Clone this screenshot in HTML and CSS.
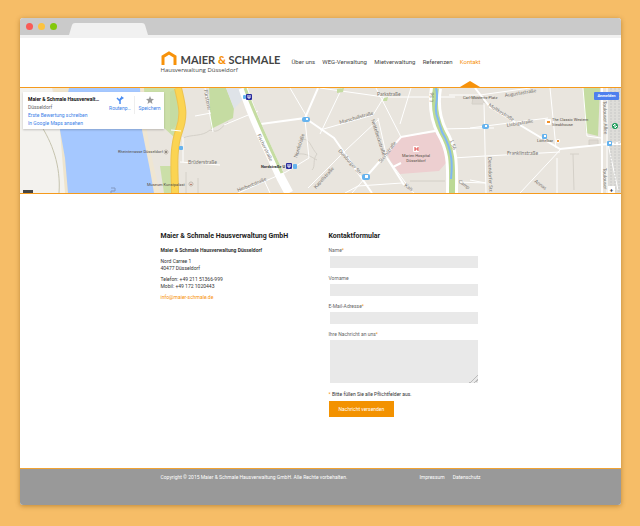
FILE: index.html
```html
<!DOCTYPE html>
<html lang="de">
<head>
<meta charset="utf-8">
<meta name="viewport" content="width=device-width, initial-scale=1">
<title>Maier &amp; Schmale Hausverwaltung Düsseldorf</title>
<link rel="stylesheet" href="styles.css">
</head>
<body>
<div class="window">
  <div class="chrome">
    <i class="dot red"></i><i class="dot yellow"></i><i class="dot green"></i>
    <svg class="tab" viewBox="0 0 80 12" aria-hidden="true"><path d="M0 12 L3 2 Q3.500 0 6 0 H73 Q75.500 0 76 2 L79 12Z" fill="#f1f1f1"/></svg>
  </div>
  <div class="toolbar"></div>
  <header class="header">
    <div class="container header-row">
      <a class="logo" href="#">
        <span class="logo-top">
          <svg class="house" viewBox="0 0 16 14" aria-hidden="true"><path d="M2 14V5.600L8 2L14 5.600V14" fill="none" stroke="#f7920a" stroke-width="3"/></svg>
          <span class="brand">MAIER <b>&amp;</b> SCHMALE</span>
        </span>
        <span class="claim">Hausverwaltung Düsseldorf</span>
      </a>
      <nav class="nav">
        <a href="#">Über uns</a>
        <a href="#">WEG-Verwaltung</a>
        <a href="#">Mietverwaltung</a>
        <a href="#">Referenzen</a>
        <a href="#" class="active">Kontakt</a>
      </nav>
    </div>
  </header>

  <section class="map">
    <svg class="map-art" viewBox="20 88 601 105" preserveAspectRatio="xMidYMid slice" role="img" aria-label="Karte">
      <rect x="20" y="88" width="601" height="105" fill="#e9e5de"/>
      <path d="M20 88H52L60 130L69 193H20Z" fill="#f3f2ee"/>
      <path d="M53 88L60 130L65 193H70L66 130L69 88Z" fill="#eee4cd"/>
      <path d="M69 88H153L144 130L150 160L156 193H68L65 158L60 130Z" fill="#a5c8ff"/>
      <path d="M140 88L142 130L150 170L154 193H160L150 150L146 125L150 88Z" fill="#efe6d2"/>
      <path d="M40 124C52 142 61 166 59 193" fill="none" stroke="#c5c3ae"/>
      <path d="M144 88H176L180 120L174 137L164 128L146 126Z" fill="#cbdfa8"/>
      <path d="M160 166H173V193H164Z" fill="#cbdfa8"/>
      <path d="M170 92L177 88L180 122L170 131Z" fill="#c5dca2"/>
      <path d="M209 88H226L234 108L233 118L211 129Z" fill="#c5dca2"/>
      <path d="M226 88H240L246 96L234 109Z" fill="#dfe3e8"/>
      <path d="M583 88H600L598 136L586 133Z" fill="#c5dca2"/>
      <path d="M608 88H621V193H608Z" fill="#deddd9"/>
      <path d="M399 137L440 132L444 147L446 163L439 171L400 174L390 160L387 153Z" fill="#edcfd0"/>
      <path d="M393 167L401 163" stroke="#fff" stroke-width="2"/>
      <path d="M178 88C182 105 185 115 179 131C172 150 175 175 175 193" fill="none" stroke="#edc34f" stroke-width="8"/>
      <path d="M178 88C182 105 185 115 179 131C172 150 175 175 175 193" fill="none" stroke="#fbd452" stroke-width="6"/>
      <g fill="none" stroke="#d4d0c8">
        <path d="M183 138C192 134 202 137 210 130C219 134 221 127 228 122M298 141C310 135 310 147 317 154C312 160 316 166 312 170M298 154C307 153 311 157 317 160"/>
        <path d="M186 172V193M198 178V193M410 181H445M573 154L574 190M570 154H579"/>
        <path d="M589 140H598V145H589ZM473 97L480 95L485 104H472Z" fill="#ded9d2"/>
      </g>
      <g fill="none" stroke="#fff" stroke-width="1">
        <path d="M180 162L220 165M205 88L213 132M195 116L211 113M181 131L171 130M183 137V162"/>
        <path d="M224 125L258 111M238 193L286 172L309 158L305 120M264 180L270 193"/>
        <path d="M290 88L307 117M308 188L346 150L378 120M320 134L342 88M320 130L373 115L384 97M376 88L401 137M384 97L320 88M384 97H455M411 88L400 124M378 118L387 158L408 186"/>
        <path d="M441 129L485 128H494M453 158L485 156M456 182L486 183M352 193L401 137M345 193L358 186L402 183L414 193M449 95H480L530 88"/>
        <path d="M484 103L486 193M470 128L548 118M486 156L560 152M550 88L556 148M486 183L470 180M557 158V193M520 193L561 149"/>
        <path d="M583 88L587 136L601 138M620 142L608 144L618 190"/>
      </g>
      <g fill="none" stroke="#fff" stroke-width="2">
        <path d="M261 124L305 118L318 88M305 118L334 138L372 193M401 137L440 130M401 137L366 177M387 158L404 185"/>
        <path d="M475 88L490 107L560 149L608 144H621M602 88V193"/>
        <path d="M607 88V193" stroke-width="1"/>
      </g>
      <path d="M243 88C254 122 267 147 281 178L289 193" fill="none" stroke="#fff" stroke-width="9"/>
      <path d="M245 88C256 118 267 140 282 173" fill="none" stroke="#c5dca2" stroke-width="3"/>
      <path d="M436 88C433 106 436 120 442 132C454 152 452 168 452 193" fill="none" stroke="#fff" stroke-width="12"/>
      <path d="M436 88C433 106 436 120 442 132C454 152 452 168 452 193" fill="none" stroke="#bcd996" stroke-width="6"/>
      <path d="M436 88C440 100 432 107 438 119C440 126 442 132 442 132C454 152 452 168 451 179" fill="none" stroke="#80b8f3" stroke-width="2"/>
      <path d="M337 89L344 88L343 92L337 93ZM384 98L388 97L387 101L383 101Z" fill="#c5dca2"/>
      <path d="M611 88V193M615 88V193M619 88V193" stroke="#c8c8c7" stroke-dasharray="2 1"/>

      <g class="street">
        <text x="188" y="164">Brüderstraße</text>
        <text x="377" y="96">Parkstraße</text>
        <text x="507" y="155">Franklinstraße</text>
        <text transform="translate(257 135) rotate(64)">Fischerstraße</text>
        <text transform="translate(297 158) rotate(-72)">Nordstraße</text>
        <text transform="translate(340 124) rotate(-16)">Marschallstraße</text>
        <text transform="translate(371 120) rotate(72)">Nettelbeckstraße</text>
        <text transform="translate(338 151) rotate(48)">Duisburger Str.</text>
        <text transform="translate(316 189) rotate(-48)">Kapellstraße</text>
        <text transform="translate(381 163) rotate(-52)">Sternstraße</text>
        <text transform="translate(238 192) rotate(-22)">Herbertstraße</text>
        <text transform="translate(505 97) rotate(-9)">Augustastraße</text>
        <text transform="translate(507 127) rotate(-10)">Liebigstraße</text>
        <text transform="translate(488 106) rotate(32)">Moltkestraße</text>
        <text transform="translate(488 157) rotate(88)">Derendorfer Str.</text>
        <text transform="translate(603 101) rotate(88)">Toulouser Allee</text>
        <text transform="translate(603 168) rotate(88)">Toulouser</text>
        <text transform="translate(534 182) rotate(36)">Annas</text>
        <text transform="translate(458 182) rotate(36)">Camp</text>
        <text transform="translate(404 186) rotate(36)">Kais</text>
        <text transform="translate(204 90) rotate(80)">Fürstenw</text>
        <text transform="translate(450 141) rotate(70)">L 56</text>
        <text transform="translate(433 102) rotate(-85)">L 56</text>
      </g>
      <g class="place">
        <text x="118" y="153">Rheinterrasse Düsseldorf</text>
        <text x="147" y="186">Museum Kunstpalast</text>
        <text x="463" y="99">Carl-Mosterts-Platz</text>
        <text x="261" y="168" class="strong">Nordstraße U</text>
        <text x="537" y="142">Löffelbar</text>
        <text x="552" y="121">The Classic Western</text>
        <text x="552" y="126">Steakhouse</text>
        <text x="416" y="157" text-anchor="middle">Marien Hospital</text>
        <text x="416" y="162" text-anchor="middle">Düsseldorf</text>
      </g>
      <rect x="413" y="146" width="6" height="6" rx="1" fill="#fff"/><path d="M415 147V151M418 147V151M415 149H418" stroke="#e14545"/>
      <g fill="#fff" stroke="#bdb4a8"><circle cx="166" cy="152" r="2"/><circle cx="191" cy="184" r="2"/></g>
      <circle cx="166" cy="152" r="1" fill="#6d6256"/><path d="M190 185L191 183L192 185Z" fill="#a75e44"/>
      <g fill="#2b2c9d"><rect x="246" y="94" width="6" height="6" rx="1"/><rect x="286" y="163" width="6" height="6" rx="1"/></g>
      <path d="M248 95V98H250V95M288 164V167H290V164" fill="none" stroke="#fff"/>
      <g fill="#66b3ee">
        <rect x="243" y="95" width="3" height="4" rx="1"/>
        <rect x="293" y="164" width="4" height="5" rx="1"/>
        <rect x="179" y="146" width="4" height="4" rx="1"/>
        <rect x="302" y="117" width="8" height="5" rx="2"/>
        <rect x="362" y="174" width="8" height="6" rx="2"/>
        <rect x="482" y="124" width="7" height="5" rx="2"/>
        <rect x="542" y="134" width="5" height="5" rx="1"/>
        <rect x="607" y="141" width="5" height="5" rx="1"/>
      </g>
      <g fill="#fff"><rect x="306" y="118" width="2" height="2"/><rect x="365" y="175" width="3" height="3"/><rect x="485" y="125" width="2" height="2"/><rect x="544" y="135" width="2" height="2"/><rect x="609" y="142" width="2" height="2"/></g>
      <circle cx="615" cy="126" r="3" fill="#169b57"/><path d="M613 126L615 124V128L617 126" fill="none" stroke="#fff"/>
      <g fill="#fff"><rect x="545" y="119" width="6" height="6" rx="1"/><circle cx="558" cy="141" r="2"/></g>
      <path d="M547 121H550V123H547ZM557 140H559V142H557Z" fill="#f29128"/>
      <path d="M111 188H115V191H111V193" fill="none" stroke="#8198c1"/>
    </svg>
    <div class="place-card">
      <div class="place-info">
        <strong>Maier &amp; Schmale Hausverwalt…</strong>
        <span>Düsseldorf</span>
        <a href="#">Erste Bewertung schreiben</a>
        <a href="#">In Google Maps ansehen</a>
      </div>
      <a class="action" href="#"><svg viewBox="0 0 8 8" aria-hidden="true"><path d="M4 8V5L1 2M4 5Q4 2 6 2" fill="none" stroke="#4a8df2" stroke-width="1.500"/><path d="M5 0L8 2L5 4Z" fill="#4a8df2"/></svg>Routenp…</a>
      <a class="action save" href="#"><svg viewBox="0 0 8 8" aria-hidden="true"><path d="M4 0L5.100 2.800L8 3L5.800 4.900L6.500 8L4 6.300L1.500 8L2.200 4.900L0 3L2.900 2.800Z" fill="#999"/></svg>Speichern</a>
    </div>
    <button class="login" type="button">Anmelden</button>
    <button class="zoom" type="button" aria-label="Vergrößern">+</button>
    <span class="scale"></span>
  </section>

  <main class="main">
    <div class="container content">
      <section class="address">
        <h1>Maier &amp; Schmale Hausverwaltung GmbH</h1>
        <p><b>Maier &amp; Schmale Hausverwaltung Düsseldorf</b></p>
        <p>Nord Carree 1<br>40477 Düsseldorf</p>
        <p>Telefon: +49 211 51366-999<br>Mobil: +49 172 1020443</p>
        <p><a href="mailto:info@maier-schmale.de">info@maier-schmale.de</a></p>
      </section>
      <form class="form">
        <h2>Kontaktformular</h2>
        <label for="name">Name<em>*</em></label>
        <input id="name" type="text">
        <label for="vorname">Vorname</label>
        <input id="vorname" type="text">
        <label for="email">E-Mail-Adresse<em>*</em></label>
        <input id="email" type="email">
        <label for="msg">Ihre Nachricht an uns<em>*</em></label>
        <textarea id="msg"></textarea>
        <p class="hint"><em>*</em> Bitte füllen Sie alle Pflichtfelder aus.</p>
        <button class="submit" type="button">Nachricht versenden</button>
      </form>
    </div>
  </main>

  <footer class="footer">
    <div class="container footer-row">
      <span>Copyright © 2015 Maier &amp; Schmale Hausverwaltung GmbH. Alle Rechte vorbehalten.</span>
      <nav><a href="#">Impressum</a><a href="#">Datenschutz</a></nav>
    </div>
  </footer>
</div>
</body>
</html>
```
FILE: styles.css
```css
* { box-sizing: border-box; }
body {
  margin: 0;
  min-height: 100vh;
  padding: 18px 19px 21px 20px;
  display: flex;
  background: #f6bd67;
  color: #333;
  font: 5px/8px Roboto, sans-serif;
}
a { color: inherit; text-decoration: none; }
em { color: #f7920a; font-style: normal; }
.window {
  flex: 1;
  min-width: 0;
  display: flex;
  flex-direction: column;
  overflow: hidden;
  border-radius: 3px;
  background: #fff;
  box-shadow: 0 1px 5px rgba(120, 70, 0, .45);
}
.chrome {
  height: 17px;
  padding-left: 6px;
  display: flex;
  align-items: center;
  gap: 5px;
  background: #cacaca;
}
.dot { width: 7px; height: 7px; border-radius: 50%; }
.red { background: #fa5b55; }
.yellow { background: #fcc33f; }
.green { background: #83c80b; }
.tab { width: 80px; height: 12px; margin-left: 7px; align-self: flex-end; }
.toolbar { height: 3px; background: #f1f1f1; }
.container { width: 100%; max-width: 320px; margin: 0 auto; }
.header { height: 50px; padding-top: 12px; border-bottom: 1px solid #f59a1c; }
.header-row { display: flex; gap: 11px; height: 37px; }
.logo { display: flex; flex-direction: column; white-space: nowrap; }
.logo-top { display: flex; align-items: flex-end; gap: 4px; height: 16px; }
.house { width: 16px; height: 14px; margin-bottom: 1px; }
.brand { font: bold 11px/13px Lato, sans-serif; color: #444; }
.brand b { color: #f7920a; }
.claim { font: 6px/9px "Open Sans", sans-serif; color: #444; }
.nav { flex: 1; display: flex; justify-content: space-between; font-size: 6px; line-height: 24px; white-space: nowrap; color: #444; }
.nav .active { position: relative; color: #f7920a; }
.nav .active::after {
  content: "";
  position: absolute;
  left: 50%;
  bottom: 0;
  margin-left: -10px;
  border: 10px solid transparent;
  border-top: 0;
  border-bottom: 6px solid #f7920a;
}
.map { position: relative; }
.map-art { display: block; width: 100%; height: 105px; }
.street { font: 5px Lato, sans-serif; fill: #77736e; }
.place { font: 4px Roboto, sans-serif; fill: #544d46; }
.strong { font-weight: bold; fill: #333; }
.place-card {
  position: absolute;
  left: 3px;
  top: 4px;
  width: 141px;
  height: 37px;
  padding: 3px 0 0 5px;
  display: flex;
  background: #fff;
  box-shadow: 0 1px 2px rgba(0, 0, 0, .2);
}
.place-info { flex: 1; display: flex; flex-direction: column; white-space: nowrap; color: #666; }
.place-info strong { color: #111; }
.place-info a, .action { color: #3b7fe8; }
.action { width: 28px; height: 18px; margin-top: 1px; display: flex; flex-direction: column; align-items: center; line-height: 9px; }
.action svg { width: 8px; height: 8px; }
.save { width: 30px; border-left: 1px solid #eee; }
.login { position: absolute; right: 2px; top: 4px; width: 25px; height: 8px; padding: 0; border: 0; border-radius: 1px; background: #4e80ee; color: #fff; font: bold 4px/8px Roboto, sans-serif; }
.zoom { position: absolute; right: 6px; bottom: 0; width: 7px; height: 7px; padding: 0; border: 0; background: #fff; color: #333; font: bold 6px/7px Roboto, sans-serif; }
.scale { position: absolute; left: 3px; bottom: 0; width: 10px; height: 3px; background: #444; }
.main { flex: 1; border-top: 1px solid #f59a1c; }
.content { display: grid; grid-template-columns: 152px 149px; gap: 16px; padding-top: 37px; }
h1, h2 { margin: 0 0 4px; font-size: 7px; line-height: 11px; color: #1c1c1c; white-space: nowrap; }
p { margin: 0 0 3px; }
.address p { margin: 0 0 4px; line-height: 7px; white-space: nowrap; }
.address h1 { margin-bottom: 5px; }
.address a { color: #f7920a; }
.form label { display: block; color: #666; margin-bottom: 2px; }
.form input, .form textarea { display: block; width: 148px; margin: 0 0 6px 1px; padding: 1px 3px; border: 0; border-radius: 0; background: #e9e9e9; font: inherit; }
.form input { height: 12px; }
.form textarea { height: 43px; margin-bottom: 7px; resize: vertical; }
.form textarea::-webkit-resizer { background: linear-gradient(135deg, transparent 70%, #bbb 70% 76%, transparent 76% 84%, #bbb 84% 90%, transparent 90%); }
.submit { height: 16px; padding: 0 10px; border: 0; background: #f39200; color: #fff; font: inherit; white-space: nowrap; }
.footer { height: 37px; padding-top: 4px; border-top: 1px solid #f0a232; background: #999; color: #fff; }
.footer-row { display: flex; justify-content: space-between; white-space: nowrap; }
.footer nav { display: flex; gap: 8px; }
```
